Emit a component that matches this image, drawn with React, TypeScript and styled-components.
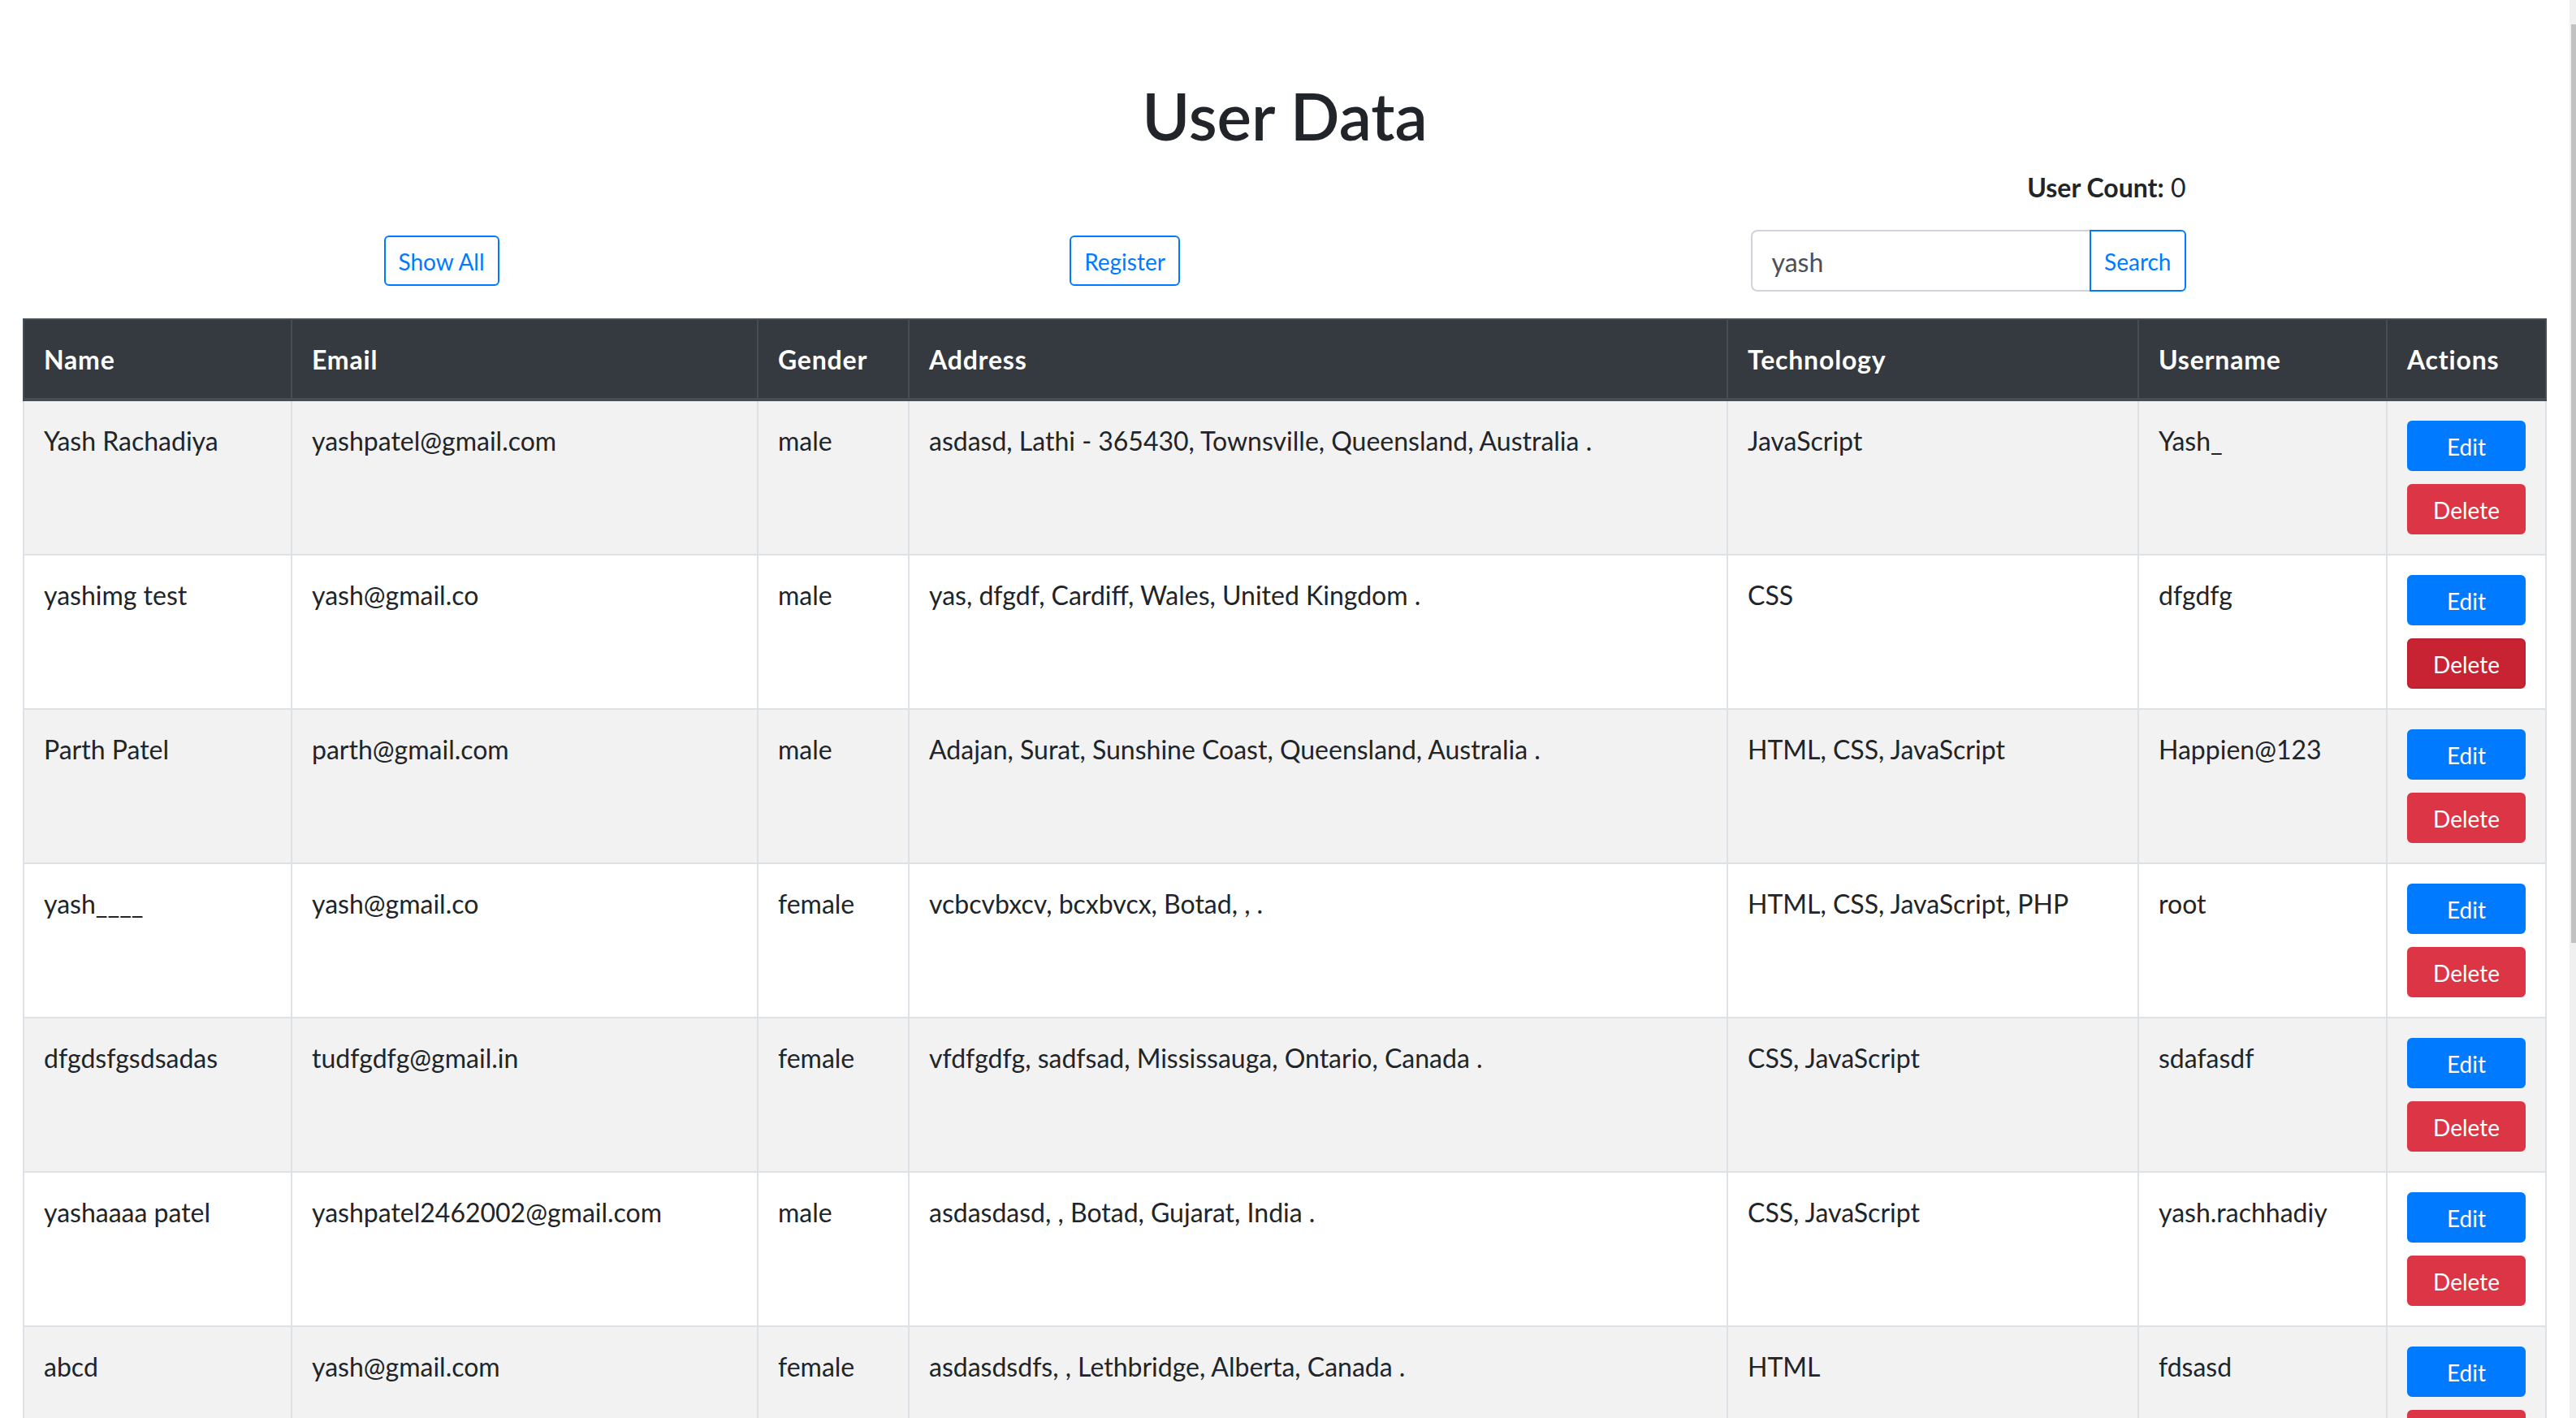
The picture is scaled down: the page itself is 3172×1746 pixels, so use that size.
import React from "react";
import styled, { createGlobalStyle, css } from "styled-components";

const GlobalStyle = createGlobalStyle`
  html { overflow: hidden; }
  body {
    margin: 0;
    background: #ffffff;
    color: #212529;
    font-family: "Lato", "Noto Sans", sans-serif;
    font-size: 32px;
    line-height: 1.5;
  }
  * { box-sizing: border-box; }
`;

const Page = styled.div`
  padding: 94px 8px 0 0;
  width: 100%;
`;

const Title = styled.h1`
  margin: 0 0 16px;
  font-size: 80px;
  font-weight: 600;
  line-height: 96px;
  text-align: center;
  color: #212529;
`;

const Toolbar = styled.div`
  width: 2219px;
  margin: 0 auto;
`;

const CountLine = styled.div`
  text-align: right;
  line-height: 48px;
  padding-top: 1px;
  margin-bottom: 28px;
  strong { font-weight: 700; }
`;

const Controls = styled.div`
  display: flex;
  justify-content: space-between;
  align-items: center;
`;

const outlinePrimary = css`
  color: #007bff;
  background: transparent;
  border: 2px solid #007bff;
  font-family: "Lato", "Noto Sans", sans-serif;
  font-size: 28px;
  line-height: 42px;
  padding: 9px 16px 7px;
  cursor: pointer;
`;

const OutlineButton = styled.button`
  ${outlinePrimary};
  border-radius: 6px;
`;

const SearchGroup = styled.div`
  display: flex;
  align-items: stretch;
  width: 536px;
  height: 76px;
`;

const SearchInput = styled.input`
  flex: 1 1 auto;
  min-width: 0;
  height: 76px;
  padding: 13px 24px 11px;
  font-family: "Lato", "Noto Sans", sans-serif;
  font-size: 32px;
  line-height: 48px;
  color: #495057;
  background: #ffffff;
  border: 2px solid #ced4da;
  border-radius: 8px 0 0 8px;
  outline: none;
`;

const SearchButton = styled.button`
  ${outlinePrimary};
  width: 119px;
  margin-left: -2px;
  border-radius: 0 6px 6px 0;
  position: relative;
`;

const TableWrap = styled.div`
  margin-top: 33px;
  padding: 0 22px 0 28px;
`;

const Table = styled.table`
  width: 3106px;
  border-collapse: collapse;
  table-layout: fixed;
`;

const HeadCell = styled.th`
  background: #343a40;
  color: #ffffff;
  font-weight: 700;
  letter-spacing: 0.8px;
  text-align: left;
  vertical-align: bottom;
  padding: 25px 24px 23px;
  line-height: 48px;
  border: 2px solid #454d55;
  border-bottom-width: 4px;
`;

const BodyRow = styled.tr<{ $striped: boolean }>`
  background: ${(p) => (p.$striped ? "#f2f2f2" : "#ffffff")};
`;

const Cell = styled.td`
  padding: 25px 24px 23px;
  vertical-align: top;
  line-height: 48px;
  border: 2px solid #dee2e6;
  white-space: nowrap;
`;

const ActionCell = styled(Cell)`
  padding: 24px;
`;

const ActionButton = styled.button<{ $variant: "edit" | "delete"; $hover?: boolean }>`
  display: block;
  width: 100%;
  height: 62px;
  padding: 9px 16px 7px;
  font-family: "Lato", "Noto Sans", sans-serif;
  font-size: 28px;
  line-height: 42px;
  color: #ffffff;
  border-radius: 6px;
  cursor: pointer;
  border: 2px solid;
  ${(p) =>
    p.$variant === "edit"
      ? css`
          background: #007bff;
          border-color: #007bff;
          margin-bottom: 16px;
        `
      : p.$hover
      ? css`
          background: #c82333;
          border-color: #bd2130;
        `
      : css`
          background: #dc3545;
          border-color: #dc3545;
        `}
`;

const ScrollTrack = styled.div`
  position: fixed;
  top: 0;
  right: 0;
  width: 8px;
  height: 100vh;
  background: #f0f0f0;
`;

const ScrollThumb = styled.div`
  margin: 30px 0 0 2px;
  width: 6px;
  height: 1131px;
  background: #c1c1c1;
`;

type User = {
  name: string;
  email: string;
  gender: string;
  address: string;
  tech: string;
  username: string;
};

const users: User[] = [
  { name: "Yash Rachadiya", email: "yashpatel@gmail.com", gender: "male", address: "asdasd, Lathi - 365430, Townsville, Queensland, Australia .", tech: "JavaScript", username: "Yash_" },
  { name: "yashimg test", email: "yash@gmail.co", gender: "male", address: "yas, dfgdf, Cardiff, Wales, United Kingdom .", tech: "CSS", username: "dfgdfg" },
  { name: "Parth Patel", email: "parth@gmail.com", gender: "male", address: "Adajan, Surat, Sunshine Coast, Queensland, Australia .", tech: "HTML, CSS, JavaScript", username: "Happien@123" },
  { name: "yash____", email: "yash@gmail.co", gender: "female", address: "vcbcvbxcv, bcxbvcx, Botad, , .", tech: "HTML, CSS, JavaScript, PHP", username: "root" },
  { name: "dfgdsfgsdsadas", email: "tudfgdfg@gmail.in", gender: "female", address: "vfdfgdfg, sadfsad, Mississauga, Ontario, Canada .", tech: "CSS, JavaScript", username: "sdafasdf" },
  { name: "yashaaaa patel", email: "yashpatel2462002@gmail.com", gender: "male", address: "asdasdasd, , Botad, Gujarat, India .", tech: "CSS, JavaScript", username: "yash.rachhadiy" },
  { name: "abcd", email: "yash@gmail.com", gender: "female", address: "asdasdsdfs, , Lethbridge, Alberta, Canada .", tech: "HTML", username: "fdsasd" },
];

const columns = [
  { label: "Name", width: 330 },
  { label: "Email", width: 574 },
  { label: "Gender", width: 186 },
  { label: "Address", width: 1008 },
  { label: "Technology", width: 506 },
  { label: "Username", width: 306 },
  { label: "Actions", width: 196 },
];

export default function App() {
  return (
    <>
      <GlobalStyle />
      <Page>
        <Title>User Data</Title>
        <Toolbar>
          <CountLine>
            <strong>User Count:</strong> 0
          </CountLine>
          <Controls>
            <OutlineButton>Show All</OutlineButton>
            <OutlineButton>Register</OutlineButton>
            <SearchGroup>
              <SearchInput defaultValue="yash" />
              <SearchButton>Search</SearchButton>
            </SearchGroup>
          </Controls>
        </Toolbar>
        <TableWrap>
          <Table>
            <colgroup>
              {columns.map((c) => (
                <col key={c.label} style={{ width: c.width }} />
              ))}
            </colgroup>
            <thead>
              <tr>
                {columns.map((c) => (
                  <HeadCell key={c.label}>{c.label}</HeadCell>
                ))}
              </tr>
            </thead>
            <tbody>
              {users.map((u, i) => (
                <BodyRow key={i} $striped={i % 2 === 0}>
                  <Cell>{u.name}</Cell>
                  <Cell>{u.email}</Cell>
                  <Cell>{u.gender}</Cell>
                  <Cell>{u.address}</Cell>
                  <Cell>{u.tech}</Cell>
                  <Cell>{u.username}</Cell>
                  <ActionCell>
                    <ActionButton $variant="edit">Edit</ActionButton>
                    <ActionButton $variant="delete" $hover={i === 1}>
                      Delete
                    </ActionButton>
                  </ActionCell>
                </BodyRow>
              ))}
            </tbody>
          </Table>
        </TableWrap>
      </Page>
      <ScrollTrack>
        <ScrollThumb />
      </ScrollTrack>
    </>
  );
}
